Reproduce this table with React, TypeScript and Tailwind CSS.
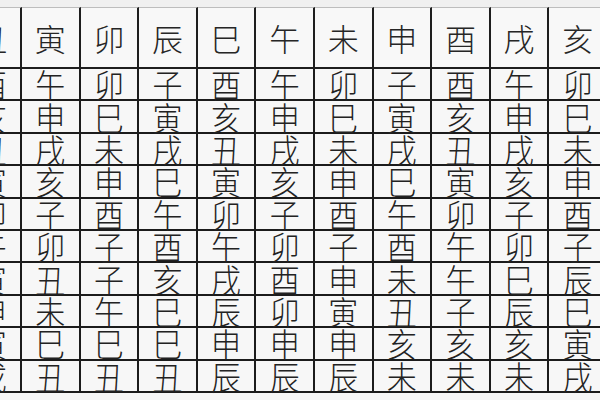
import React from "react";

const header = ["丑", "寅", "卯", "辰", "巳", "午", "未", "申", "酉", "戌", "亥"];
const rows: string[][] = [
  ["酉", "午", "卯", "子", "酉", "午", "卯", "子", "酉", "午", "卯"],
  ["亥", "申", "巳", "寅", "亥", "申", "巳", "寅", "亥", "申", "巳"],
  ["丑", "戌", "未", "戌", "丑", "戌", "未", "戌", "丑", "戌", "未"],
  ["寅", "亥", "申", "巳", "寅", "亥", "申", "巳", "寅", "亥", "申"],
  ["卯", "子", "酉", "午", "卯", "子", "酉", "午", "卯", "子", "酉"],
  ["午", "卯", "子", "酉", "午", "卯", "子", "酉", "午", "卯", "子"],
  ["寅", "丑", "子", "亥", "戌", "酉", "申", "未", "午", "巳", "辰"],
  ["申", "未", "午", "巳", "辰", "卯", "寅", "丑", "子", "辰", "巳"],
  ["寅", "巳", "巳", "巳", "申", "申", "申", "亥", "亥", "亥", "寅"],
  ["戌", "丑", "丑", "丑", "辰", "辰", "辰", "未", "未", "未", "戌"],
];

const font = { fontFamily: '"Noto Sans CJK SC", "Noto Sans CJK JP", sans-serif' };

export default function App() {
  return (
    <div className="w-[600px] h-[400px] overflow-hidden bg-[#f6f6f6]" style={font}>
      <div className="h-[7px] bg-[#f0f0f0]" />
      <div className="ml-[-36.6px] grid grid-cols-[repeat(11,58.6px)] grid-rows-[62px_repeat(10,32.4px)] w-max">
        {header.map((h, i) => (
          <div
            key={"h" + i}
            className="flex items-center justify-center border-t border-t-[#bdbdbd] border-r-2 border-b-2 border-r-[#1e1e1e] border-b-[#1e1e1e] bg-[#f8f8f8] text-[31px] leading-none font-light text-[#262626]"
          >
            {h}
          </div>
        ))}
        {rows.map((r, ri) =>
          r.map((c, ci) => (
            <div
              key={ri + "-" + ci}
              className="flex items-center justify-center overflow-visible border-r-2 border-b-2 border-[#1c1c1c] bg-[#f7f7f7] text-[30px] leading-[28px] font-light text-[#222222]"
            >
              <span className="inline-block scale-y-[1.08]">{c}</span>
            </div>
          ))
        )}
      </div>
    </div>
  );
}
